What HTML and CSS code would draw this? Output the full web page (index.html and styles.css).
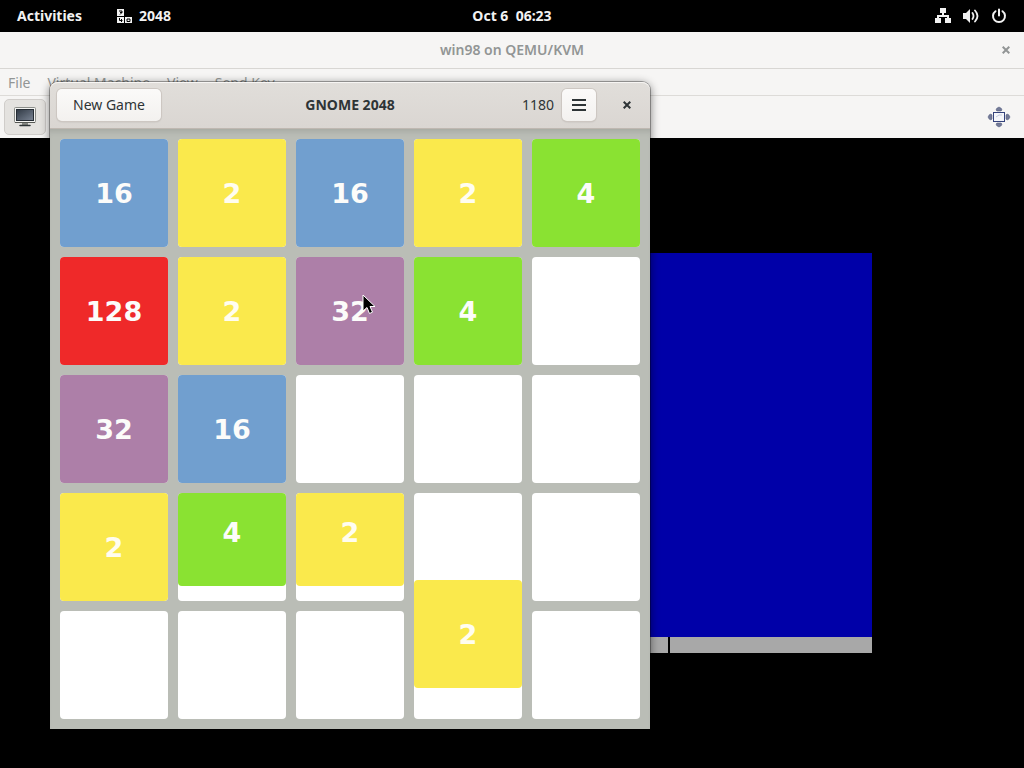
FILE: index.html
```html
<!DOCTYPE html>
<html lang="en">
<head>
<meta charset="utf-8">
<meta name="viewport" content="width=device-width, initial-scale=1">
<title>GNOME 2048</title>
<link rel="stylesheet" href="styles.css">
</head>
<body>
<div class="desktop">
  <header class="topbar">
    <div class="topbar-left">
      <button class="topbar-button" type="button">Activities</button>
      <button class="topbar-button app-menu" type="button">
        <svg width="16" height="16" viewBox="0 0 16 16" aria-hidden="true">
          <path fill="#f2f2f2" d="M1 1h7v7H1zM1 9h7v6H1zM9 9h7v6H9z"/>
          <path fill="none" stroke="#000" d="M3 3h3v1.500H4M6 4.500l-2 2M3.500 10v2.500h3M5.500 11v3M11 11h3v2.500h-3z"/>
        </svg>
        <span>2048</span>
      </button>
    </div>
    <button class="topbar-button clock" type="button">Oct 6&nbsp; 06:23</button>
    <button class="topbar-button status" type="button" aria-label="System menu">
      <svg width="16" height="16" viewBox="0 0 16 16" fill="#f2f2f2" aria-hidden="true">
        <path d="M5 0h6v5H9v2h5v3h2v5h-6v-5h2V9H4v1h2v5H0v-5h2V7h5V5H5z"/>
      </svg>
      <svg width="16" height="16" viewBox="0 0 16 16" aria-hidden="true">
        <path fill="#f2f2f2" d="M0 5h3l4-4v14l-4-4H0z"/>
        <path fill="none" stroke="#f2f2f2" stroke-width="1.800" stroke-linecap="round" d="M9.500 5q2 3 0 6M12 2.500q5 5.500 0 11"/>
      </svg>
      <svg width="16" height="16" viewBox="0 0 16 16" fill="none" stroke="#f2f2f2" stroke-width="2" stroke-linecap="round" aria-hidden="true">
        <path d="M4.500 3.200a6 6 0 1 0 7 0M8 1.500v6"/>
      </svg>
    </button>
  </header>

  <section class="vm" aria-label="win98 on QEMU/KVM">
    <div class="vm-title">
      <h2>win98 on QEMU/KVM</h2>
      <button class="close" type="button" aria-label="Close">
        <svg width="8" height="8" viewBox="0 0 8 8" stroke="currentColor" stroke-width="2" aria-hidden="true"><path d="M.7.7l6.600 6.600M7.300.7L.7 7.300"/></svg>
      </button>
    </div>
    <nav class="vm-menu">
      <button type="button">File</button>
      <button type="button">Virtual Machine</button>
      <button type="button">View</button>
      <button type="button">Send Key</button>
    </nav>
    <div class="vm-tools">
      <button class="console" type="button" aria-label="Show the graphical console">
        <svg width="24" height="24" viewBox="0 0 24 24" aria-hidden="true">
          <defs><linearGradient id="screen" x1="0" y1="0" x2="1" y2="1"><stop offset="0" stop-color="#303944"/><stop offset="1" stop-color="#7a8494"/></linearGradient></defs>
          <rect x="1.500" y="2.500" width="21" height="15" rx="1" fill="#f4f4f2" stroke="#8b8d89"/>
          <rect x="3.500" y="4.500" width="17" height="11" fill="url(#screen)" stroke="#262c34"/>
          <path d="M2 17.500h20" stroke="#555753"/>
          <path d="M9 18h6v2H9z" fill="#888a85"/>
          <path d="M7 20.500h10" stroke="#2e3436" stroke-width="1.500" stroke-linecap="round"/>
        </svg>
      </button>
      <button class="fullscreen" type="button" aria-label="Fullscreen">
        <svg width="24" height="24" viewBox="0 0 24 24" aria-hidden="true">
          <rect x="6.500" y="7.500" width="11" height="9" fill="#f5f6fa" stroke="#35437c"/>
          <path d="M9 12q3-3 6-2" fill="none" stroke="#c3c9dd"/>
          <g fill="#747b97" stroke="#4d567c" stroke-width=".5">
            <path d="M12 2q3 1 3 3l-1 1h-4L9 5q0-2 3-3zM12 22q3-1 3-3l-1-1h-4l-1 1q0 2 3 3zM1 12q1-3 3-3l1 1v4l-1 1q-2 0-3-3zM23 12q-1-3-3-3l-1 1v4l1 1q2 0 3-3z"/>
          </g>
        </svg>
      </button>
    </div>
    <div class="vm-display">
      <div class="guest">
        <div class="guest-screen"></div>
        <div class="guest-status"><span></span><span></span></div>
      </div>
    </div>
  </section>

  <main class="game">
    <header class="game-header">
      <button class="raised new-game" type="button">New Game</button>
      <h1>GNOME 2048</h1>
      <div class="game-actions">
        <span class="score">1180</span>
        <button class="raised menu" type="button" aria-label="Menu">
          <svg width="16" height="16" viewBox="0 0 16 16" fill="#2e3436" aria-hidden="true"><path d="M1 2h14v2H1zM1 7h14v2H1zM1 12h14v2H1z"/></svg>
        </button>
        <button class="close" type="button" aria-label="Close">
          <svg width="8" height="8" viewBox="0 0 8 8" stroke="currentColor" stroke-width="2" aria-hidden="true"><path d="M.7.7l6.600 6.600M7.300.7L.7 7.300"/></svg>
        </button>
      </div>
    </header>
    <div class="board">
      <div class="cell"><div class="tile t16">16</div></div>
      <div class="cell"><div class="tile t2">2</div></div>
      <div class="cell"><div class="tile t16">16</div></div>
      <div class="cell"><div class="tile t2">2</div></div>
      <div class="cell"><div class="tile t4">4</div></div>

      <div class="cell"><div class="tile t128">128</div></div>
      <div class="cell"><div class="tile t2">2</div></div>
      <div class="cell"><div class="tile t32">32</div>
        <svg class="pointer" width="14" height="22" viewBox="0 0 14 22" aria-hidden="true"><path d="M1 1v16l4-3.500 2.500 6 3-1.300L8 12.500h5z" fill="#000" stroke="#fff"/></svg>
      </div>
      <div class="cell"><div class="tile t4">4</div></div>
      <div class="cell"></div>

      <div class="cell"><div class="tile t32">32</div></div>
      <div class="cell"><div class="tile t16">16</div></div>
      <div class="cell"></div>
      <div class="cell"></div>
      <div class="cell"></div>

      <div class="cell"><div class="tile t2">2</div></div>
      <div class="cell clipped"><div class="tile t4 arriving">4</div></div>
      <div class="cell clipped"><div class="tile t2 arriving">2</div></div>
      <div class="cell"></div>
      <div class="cell"></div>

      <div class="cell"></div>
      <div class="cell"></div>
      <div class="cell"></div>
      <div class="cell"><div class="tile t2 leaving">2</div></div>
      <div class="cell"></div>
    </div>
  </main>
</div>
</body>
</html>
```
FILE: styles.css
```css
* {
  box-sizing: border-box;
}

body {
  margin: 0;
  background: #000;
  color: #2e3436;
  font: 14px/20px "Noto Sans", "Open Sans", sans-serif;
}

button {
  padding: 0;
  border: 0;
  background: none;
  color: inherit;
  font: inherit;
}

h1,
h2 {
  margin: 0;
  font-size: 14px;
  font-weight: 700;
}

svg {
  display: block;
}

.desktop {
  position: relative;
  display: flex;
  flex-direction: column;
  min-height: 100vh;
  overflow: hidden;
}

/* Shell top bar */
.topbar {
  display: grid;
  grid-template-columns: 1fr auto 1fr;
  align-items: center;
  height: 32px;
  padding: 0 17px;
  background: #000;
  color: #f2f2f2;
}

.topbar-left {
  display: flex;
  gap: 34px;
}

.topbar-button {
  display: flex;
  align-items: center;
  font-weight: 700;
}

.app-menu {
  gap: 7px;
}

.status {
  gap: 12px;
  justify-self: end;
}

/* Virtual machine window */
.vm {
  display: flex;
  flex: 1;
  flex-direction: column;
  background: #f6f5f4;
  color: #929595;
}

.vm-title {
  display: grid;
  grid-template-columns: 1fr auto 1fr;
  align-items: center;
  height: 37px;
  padding: 0 14px;
  border-bottom: 1px solid #d8d6d3;
}

.vm-title h2 {
  grid-column: 2;
  font-weight: 600;
}

.vm-title .close {
  justify-self: end;
}

.vm-menu {
  display: flex;
  gap: 17px;
  height: 27px;
  padding: 4px 8px;
  border-bottom: 1px solid #dddbd8;
}

.vm-tools {
  display: flex;
  align-items: center;
  justify-content: space-between;
  height: 42px;
  padding: 0 13px 0 4px;
}

.console {
  padding: 5px 8px;
  border: 1px solid #d0cdca;
  border-radius: 5px;
  background: #e4e2df;
}

.vm-display {
  display: flex;
  flex: 1;
  align-items: center;
  justify-content: center;
  padding-left: 80px;
  background: #000;
}

.guest {
  width: 640px;
}

.guest-screen {
  height: 384px;
  background: #0000a8;
}

.guest-status {
  display: grid;
  grid-template-columns: 436px 1fr;
  gap: 2px;
  height: 16px;
}

.guest-status span {
  background: #a8a8a8;
}

/* Game window, floating over the desktop */
.game {
  position: absolute;
  top: 82px;
  left: 50px;
  width: 600px;
  border-radius: 8px 8px 0 0;
  background: #babdb6;
  box-shadow: 0 0 0 1px rgba(0, 0, 0, .3), 0 2px 9px 1px rgba(0, 0, 0, .45);
}

.game-header {
  display: grid;
  grid-template-columns: 1fr auto 1fr;
  align-items: center;
  height: 47px;
  padding: 0 7px;
  border-bottom: 1px solid #bfb8b1;
  border-radius: 8px 8px 0 0;
  background: linear-gradient(#e1deda, #dad6d2);
  box-shadow: inset 0 1px #f7f5f3;
}

.raised {
  height: 32px;
  border-radius: 5px;
  background: linear-gradient(#fbfaf9, #f3f1ef);
  box-shadow: 0 0 0 1px #cdc7c2, 0 1px 2px rgba(0, 0, 0, .15);
}

.new-game {
  justify-self: start;
  padding: 0 16px;
}

.game-actions {
  display: flex;
  align-items: center;
  justify-self: end;
  padding-right: 12px;
}

.score {
  margin-right: 8px;
}

.menu {
  margin-right: 27px;
  padding: 0 9px;
}

.board {
  display: grid;
  grid-template-columns: repeat(5, 1fr);
  gap: 10px;
  padding: 10px;
  box-shadow: inset 0 6px 6px -4px rgba(0, 0, 0, .12);
}

.cell {
  position: relative;
  aspect-ratio: 1;
  border-radius: 4px;
  background: #fff;
}

.clipped {
  overflow: hidden;
}

.tile {
  display: flex;
  align-items: center;
  justify-content: center;
  height: 100%;
  padding-top: 2px;
  border-radius: 4px;
  color: #fcfcfa;
  font: bold 27px/32px "DejaVu Sans", sans-serif;
}

.t2 {
  background: #fae94c;
  color: #fffdf0;
}

.t4 {
  background: #8ae232;
}

.t16 {
  background: #719fcf;
}

.t32 {
  background: #ad7fa8;
}

.t128 {
  background: #ef2929;
}

/* Tiles in mid-slide overlap their neighbours */
.arriving,
.leaving {
  position: absolute;
  inset: -15px 0 auto;
}

.leaving {
  top: -31px;
}

.pointer {
  position: absolute;
  top: 37px;
  left: 66px;
}
```
